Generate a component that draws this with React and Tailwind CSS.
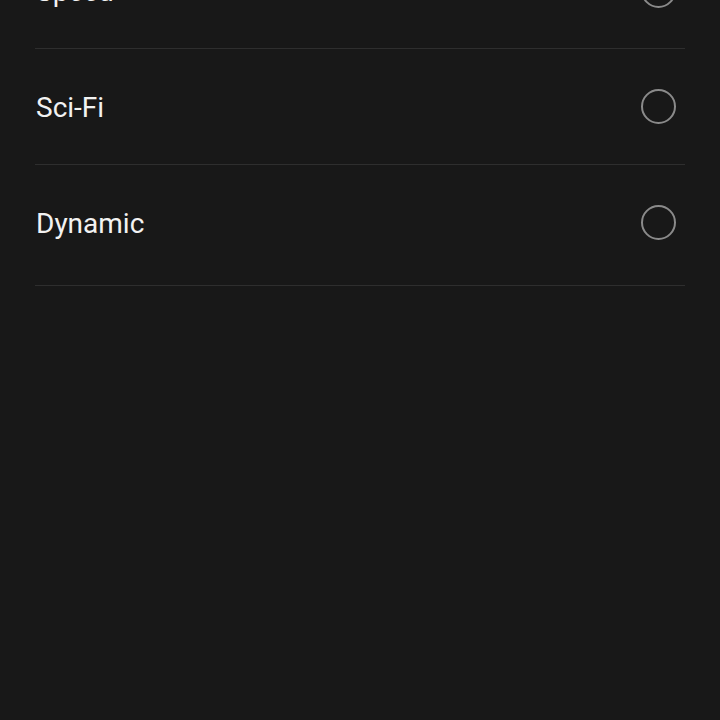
const options = [
  { label: 'Speed', h: 'h-[116px]' },
  { label: 'Sci-Fi', h: 'h-[116px]' },
  { label: 'Dynamic', h: 'h-[121px] pb-[5px]' },
];

function Radio() {
  return <span className="mr-[9px] block h-[35px] w-[35px] rounded-full border-2 border-[#8a8a8a]" />;
}

export default function App() {
  return (
    <div className="h-[720px] w-[720px] overflow-hidden bg-[#181818] font-['Roboto',sans-serif]">
      <div className="-mt-[67px] px-[35px]">
        {options.map((opt) => (
          <div
            key={opt.label}
            className={`flex items-center justify-between border-b border-[#2e2e2e] ${opt.h}`}
          >
            <span className="mt-[3px] pl-px text-[28px] leading-none text-[#f2f2f2]">{opt.label}</span>
            <Radio />
          </div>
        ))}
      </div>
    </div>
  );
}
